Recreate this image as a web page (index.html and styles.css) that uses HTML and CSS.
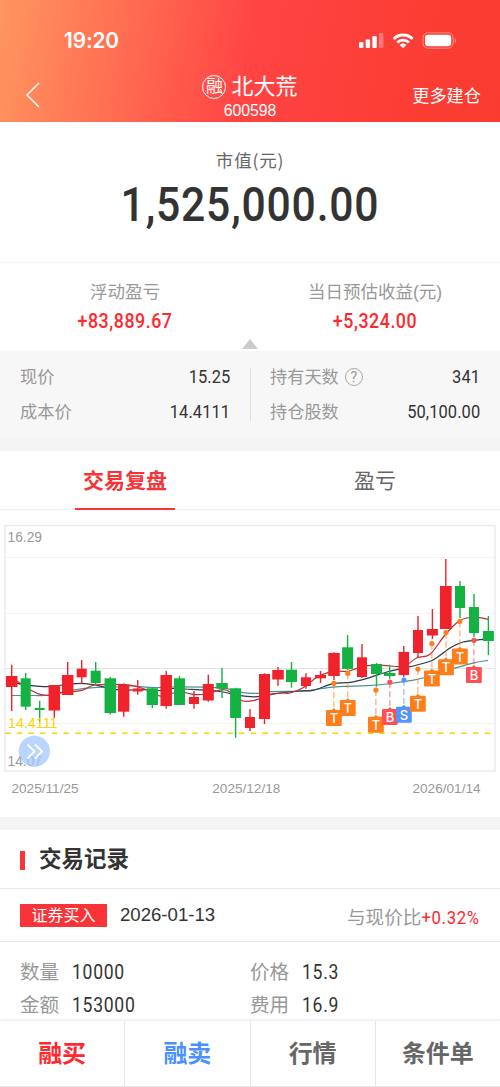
FILE: index.html
```html
<!DOCTYPE html>
<html lang="zh-CN">
<head>
    <meta charset="UTF-8">
    <meta name="viewport" content="width=device-width, initial-scale=1.0">
    <title>北大荒 600598</title>
    <link rel="stylesheet" href="styles.css">
</head>
<body>

<div class="page">
    <header class="header">
        <div class="status-bar">
            <span class="time">19:20</span>
            <svg class="status-icons" width="98" height="18" viewBox="0 0 98 18" fill="#fff">
                <rect x="0" y="10" width="4.4" height="6" rx="1.2"/>
                <rect x="6.7" y="7.3" width="4.4" height="8.7" rx="1.2"/>
                <rect x="13.4" y="4" width="4.4" height="12" rx="1.2"/>
                <rect x="20" y="1" width="4.4" height="15" rx="1.2" opacity="0.3"/>
                <!-- Wifi -->
                <path d="M33.6 5.9a15 15 0 0 1 21 0l-2 2.2a12 12 0 0 0-17 0z"/>
                <path d="M37.2 9.5a10 10 0 0 1 13.8 0l-2 2.1a7 7 0 0 0-9.8 0z"/>
                <path d="M40.7 12.9a5 5 0 0 1 6.8 0L44.1 16.2z"/>
                <!-- Battery -->
                <rect x="64" y="0.8" width="30.2" height="15.4" rx="4.8" fill="none" stroke="#fff" stroke-opacity="0.4"/>
                <rect x="66" y="2.8" width="26.2" height="11.4" rx="3"/>
                <path d="M95.8 6v5.2c1.6-.7 1.6-4.5 0-5.2z" opacity="0.5"/>
            </svg>
        </div>
        <div class="nav">
            <svg class="back" width="16" height="26" viewBox="0 0 16 26">
                <path d="M15 1L3 13l12 12" fill="none" stroke="#fff" stroke-width="1.5"/>
            </svg>
            <div class="stock">
                <div class="stock-name"><span class="badge">融</span>北大荒</div>
                <div class="stock-code">600598</div>
            </div>
            <span class="more">更多建仓</span>
        </div>
    </header>

    <section class="market-value">
        <div class="label">市值(元)</div>
        <div class="total">1,525,000.00</div>
    </section>

    <section class="profit">
        <div class="profit-item">
            <div class="profit-label">浮动盈亏</div>
            <div class="profit-value">+83,889.67</div>
        </div>
        <div class="profit-item">
            <div class="profit-label">当日预估收益(元)</div>
            <div class="profit-value">+5,324.00</div>
        </div>
        <span class="arrow-up"></span>
    </section>

    <section class="holding">
        <div class="holding-col">
            <div class="holding-row"><span>现价</span><b>15.25</b></div>
            <div class="holding-row"><span>成本价</span><b>14.4111</b></div>
        </div>
        <div class="holding-col">
            <div class="holding-row"><span>持有天数<i class="help">?</i></span><b>341</b></div>
            <div class="holding-row"><span>持仓股数</span><b>50,100.00</b></div>
        </div>
    </section>

    <nav class="tabs">
        <div class="tab"><span class="tab-text active">交易复盘</span></div>
        <div class="tab"><span class="tab-text">盈亏</span></div>
    </nav>

    <section class="chart">
        <svg id="kline" width="500" height="307" viewBox="0 510 500 307"></svg>
    </section>

    <section class="records">
        <h2 class="records-title">交易记录</h2>
        <div class="record-head">
            <span class="tag">证券买入</span>
            <span class="date">2026-01-13</span>
            <span class="compare">与现价比<em>+0.32%</em></span>
        </div>
        <div class="record-body">
            <div><span>数量</span><b>10000</b></div>
            <div><span>价格</span><b>15.3</b></div>
            <div><span>金额</span><b>153000</b></div>
            <div><span>费用</span><b>16.9</b></div>
        </div>
    </section>

    <footer class="actions">
        <div class="action buy">融买</div>
        <div class="action sell">融卖</div>
        <div class="action">行情</div>
        <div class="action">条件单</div>
    </footer>
</div>

<script src="chart.js"></script>
</body>
</html>
```

FILE: styles.css
```css
* {
    box-sizing: border-box;
}

body {
    margin: 0;
    font-family: "Liberation Sans", "Noto Sans CJK SC", sans-serif;
    background-color: #fff;
    color: #333;
}

.page {
    width: 500px;
    height: 1087px;
    display: flex;
    flex-direction: column;
    overflow: hidden;
}

/* Header */
.header {
    height: 122px;
    flex: none;
    background: linear-gradient(100deg, #ff9660 0%, #ff4444 50%, #fb3c32 85%, #fa3b30 100%);
    color: #fff;
}

.status-bar {
    height: 68px;
    padding: 27px 43px 0 64px;
    display: flex;
    justify-content: space-between;
}

.time {
    font: 600 20.8px/28px Inter, sans-serif;
    letter-spacing: -0.1px;
}

.status-icons {
    margin-top: 5px;
}

.nav {
    height: 54px;
    padding: 0 19px 0 24px;
    display: grid;
    grid-template-columns: 100px 1fr 105px;
}

.back {
    margin-top: 14px;
}

.stock {
    text-align: center;
}

.stock-name {
    display: flex;
    justify-content: center;
    align-items: center;
    height: 36px;
    padding-top: 2px;
    font-size: 22px;
    line-height: 34px;
}

.badge {
    width: 24px;
    height: 24px;
    margin-right: 5px;
    border: 1px solid #fff;
    border-radius: 50%;
    font-size: 17px;
    line-height: 21px;
    text-align: center;
}

.stock-code {
    font-size: 15.8px;
    line-height: 14px;
}

.more {
    font-size: 17.2px;
    line-height: 56px;
    text-align: right;
}

/* Market value */
.market-value {
    height: 141px;
    padding-top: 26px;
    text-align: center;
    border-bottom: 1px solid #f5f5f5;
}

.label {
    font-family: "Noto Sans CJK SC", sans-serif;
    font-size: 17.5px;
    line-height: 24px;
    letter-spacing: 0.8px;
    color: #666;
}

.total {
    font: 500 48.5px/66px Roboto, sans-serif;
    letter-spacing: 0.9px;
    transform: scaleX(0.88);
}

/* Profit */
.profit {
    position: relative;
    display: grid;
    grid-template-columns: 1fr 1fr;
    height: 88px;
    padding-top: 16px;
    text-align: center;
}

.profit-label {
    font-size: 17.5px;
    line-height: 26px;
    color: #999;
}

.profit-value {
    font: 500 19.8px/34px Roboto, sans-serif;
    letter-spacing: 0.6px;
    color: #ff282e;
    transform: scaleX(0.9);
}

.arrow-up {
    position: absolute;
    left: 242px;
    bottom: 2px;
    border: 8px solid transparent;
    border-top: 0;
    border-bottom: 10px solid #ccc;
}

/* Holding details */
.holding {
    display: grid;
    grid-template-columns: 1fr 1fr;
    height: 100px;
    padding: 17px 0 13px;
    background-color: #f7f7f7;
    border-bottom: 13px solid #f4f4f4;
}

.holding-col {
    height: 53px;
    padding: 0 20px;
    display: flex;
    flex-direction: column;
    justify-content: center;
}

.holding-col + .holding-col {
    border-left: 1px solid #ddd;
    padding-left: 19px;
}

.holding-row {
    display: flex;
    flex: none;
    justify-content: space-between;
    font-size: 17.2px;
    line-height: 35px;
    color: #999;
}

.holding-row b {
    font-family: Roboto, sans-serif;
    font-weight: 400;
    font-size: 18.3px;
    line-height: 34px;
    letter-spacing: 0.1px;
    color: #333;
    transform: scaleX(0.9);
    transform-origin: right;
}

.help {
    display: inline-block;
    width: 18px;
    height: 18px;
    margin-left: 6px;
    border: 1px solid #aaa;
    border-radius: 50%;
    font: 14px/16px Roboto, sans-serif;
    text-align: center;
    vertical-align: 1px;
}

/* Tabs */
.tabs {
    display: flex;
    height: 59px;
    border-bottom: 1px solid #eee;
}

.tab {
    flex: 1;
    text-align: center;
}

.tab-text {
    display: inline-block;
    width: 100px;
    height: 59px;
    font-size: 21px;
    line-height: 59px;
    color: #666;
}

.tab-text.active {
    font-weight: bold;
    color: #f83438;
    border-bottom: 2px solid #f83438;
}

/* Chart */
.chart {
    height: 320px;
    flex: none;
    border-bottom: 13px solid #f4f4f4;
}

.chart svg {
    display: block;
}

/* Trade records */
.records {
    height: 191px;
    flex: none;
    overflow: hidden;
}

.records-title {
    display: flex;
    align-items: center;
    height: 59px;
    margin: 0;
    padding: 2px 0 0 20px;
    font-size: 22.5px;
    font-weight: bold;
    line-height: 32px;
    border-bottom: 1px solid #e9e9e9;
}

.records-title::before {
    content: "";
    width: 5px;
    height: 19px;
    margin-right: 14px;
    background-color: #f83438;
}

.record-head {
    display: flex;
    align-items: flex-start;
    height: 53px;
    padding: 15px 20px 0;
    border-bottom: 1px solid #e9e9e9;
}

.tag {
    width: 87px;
    height: 23px;
    background-color: #f83438;
    color: #fff;
    font-size: 16px;
    line-height: 23px;
    text-align: center;
}

.date {
    margin-left: 13px;
    font-size: 18.6px;
    line-height: 22px;
}

.compare {
    margin-left: auto;
    font-size: 18.6px;
    line-height: 27px;
    color: #999;
}

.compare em {
    display: inline-block;
    margin-left: -6px;
    font-family: Roboto, sans-serif;
    font-style: normal;
    letter-spacing: 0.7px;
    color: #ff282e;
    transform: scaleX(0.9);
    transform-origin: right;
}

.record-body {
    display: grid;
    grid-template-columns: 230px 1fr;
    padding: 14px 20px 0;
    font-size: 19.6px;
    line-height: 33px;
    color: #999;
}

.record-body b {
    display: inline-block;
    margin-left: 13px;
    font-family: Roboto, sans-serif;
    font-weight: 400;
    font-size: 19.5px;
    letter-spacing: 0.8px;
    color: #333;
    transform: scaleX(0.9);
    transform-origin: left;
}

/* Bottom actions */
.actions {
    position: relative;
    display: flex;
    height: 66px;
    flex: none;
    background-color: #fff;
    border-bottom: 1px solid #e8e8e8;
    box-shadow: 0 -1px 3px rgba(0, 0, 0, 0.1);
}

.action {
    flex: 1;
    font-size: 24px;
    font-weight: bold;
    line-height: 65px;
    text-align: center;
    color: #666;
}

.action + .action {
    border-left: 1px solid #e6e6e6;
}

.action.buy {
    color: #ff282e;
}

.action.sell {
    color: #4a90ff;
}

/* K-line */
.axis-text {
    font-size: 13.8px;
    fill: #999;
}

.date-text {
    font-size: 13.6px;
    fill: #999;
}

.cost-text {
    font-size: 14.3px;
    fill: #fcd303;
}

.marker-text {
    font-family: Inter, sans-serif;
    font-size: 13px;
    font-weight: 500;
    fill: #fff;
    text-anchor: middle;
}
```

FILE: chart.js
```js
const UP = '#f0222b';
const DOWN = '#14b143';

// x, body width, wick top, body top, body bottom, wick bottom, color
const candles = [
    [11.7, 11.5, 664.7, 676, 687, 711, UP],
    [25.7, 10, 673, 678.3, 706.7, 710, DOWN],
    [39.7, 10, 700.7, 708, 710, 721.7, DOWN],
    [54.3, 11.5, 685, 685, 710.5, 717.7, UP],
    [67.7, 11.5, 662, 675, 695, 695, UP],
    [81.7, 10, 660, 668.7, 677.3, 684.3, UP],
    [95.7, 10, 662, 670.7, 683, 684.5, DOWN],
    [110.3, 11.5, 677, 678.3, 713, 714.3, DOWN],
    [123.7, 11.3, 683.3, 685, 711.7, 716.7, UP],
    [137.7, 10, 680, 688.5, 691.5, 694.7, UP],
    [152.3, 11.3, 686.7, 688.3, 705, 708, DOWN],
    [166.2, 11.5, 671, 675, 706, 708.7, UP],
    [179.5, 11, 676, 678.3, 705, 705, DOWN],
    [194, 10, 691, 697, 704, 708.7, UP],
    [208.3, 11, 674.7, 684, 700.5, 701.7, UP],
    [222, 11.5, 668, 683, 688.7, 698, DOWN],
    [235.6, 11, 687.7, 688.3, 718, 737.7, DOWN],
    [250, 10, 709, 717, 728, 731, UP],
    [264.5, 11, 673.3, 674, 719, 724, UP],
    [278, 11.5, 667, 670, 679.5, 685.7, UP],
    [291.5, 11, 662, 669.7, 682, 687.7, DOWN],
    [306, 10, 673.3, 677.3, 686, 688.7, UP],
    [320.5, 11, 671, 675, 678.3, 683, UP],
    [334, 11.5, 652.3, 653, 676, 680, UP],
    [347.6, 11, 635, 647.3, 669, 670, DOWN],
    [362, 10, 644, 657.3, 677, 678, UP],
    [376.5, 11, 663, 664, 674, 686.7, DOWN],
    [389.7, 11.5, 664.7, 673, 676, 678.7, DOWN],
    [403.8, 10.5, 646, 652, 675, 677, UP],
    [418, 10, 616, 630, 653, 657, UP],
    [432.4, 11, 609, 629, 635.5, 639, UP],
    [445.8, 11.7, 559, 586, 629, 629, UP],
    [460, 10, 581, 586, 608, 618, DOWN],
    [474, 10, 594, 607, 633, 637, DOWN],
    [488.4, 11, 616, 631, 641, 655, DOWN]
];

const averages = [
    {
        color: '#4c9193',
        points: [[12, 695.5], [33, 695.5], [50, 695], [73, 690], [97, 687.3], [117, 687], [133, 686], [153, 687.7], [170, 687], [210, 687.3], [227, 688.7], [243, 692.7], [257, 693.3], [270, 691.7], [293, 691.3], [310, 690.3], [330, 687.3], [345, 686.3], [367, 685.7], [387, 684], [410, 680.7], [423, 678], [445, 671], [460, 666.7], [475, 662.7], [488, 660.3]]
    },
    {
        color: '#26394d',
        points: [[12, 682.7], [17, 683.3], [32, 685.7], [47, 686.7], [63, 685], [82, 683.3], [97, 685.3], [117, 689.7], [133, 690], [147, 689.7], [157, 691], [172, 688.5], [185, 689], [217, 691], [240, 695.7], [257, 696.7], [275, 693.7], [300, 691], [313, 690.3], [333, 683.7], [350, 682.3], [367, 678.3], [387, 672], [404, 668], [417, 665], [433, 660], [450, 648], [463, 642], [480, 639.7], [488, 639]]
    },
    {
        color: '#c52b30',
        points: [[12, 680], [18, 681.7], [32, 690.7], [40, 694.3], [50, 695.3], [63, 692.3], [82, 690.3], [95, 685], [125, 684.7], [137, 686.7], [147, 690], [160, 696], [170, 694], [180, 691.7], [193, 694.3], [205, 694], [222, 689.7], [230, 692], [242, 700.7], [253, 700.7], [270, 695], [282, 693], [290, 693], [303, 687.7], [317, 677.3], [328, 672.7], [338, 671.3], [348, 671.3], [357, 668.3], [368, 665.7], [383, 665.3], [400, 666.7], [408, 664], [417, 657.7], [430, 654.3], [445, 635], [458, 621.7], [467, 618], [478, 617.3], [488, 619.3]]
    }
];

// x, dot y, box y, letter, color
const markers = [
    [333.9, 683.3, 718, 'T', '#ff7e1c'],
    [347.8, 673.3, 708, 'T', '#ff7e1c'],
    [375.9, 690, 724.7, 'T', '#ff7e1c'],
    [389.9, 682.2, 717, 'B', '#fc5054'],
    [403.9, 680, 714.8, 'S', '#5394fa'],
    [417.9, 669, 703.8, 'T', '#ff7e1c'],
    [431.9, 643.5, 678.5, 'T', '#ff7e1c'],
    [446, 632.5, 667.3, 'T', '#ff7e1c'],
    [459.9, 621.3, 656.5, 'T', '#ff7e1c'],
    [473.9, 640.3, 675, 'B', '#fc5054']
];

// Smooth line through all the points
function curve(p) {
    let d = `M${p[0]}`;
    for (let i = 0; i < p.length - 1; i++) {
        const a = p[i - 1] || p[i], b = p[i], c = p[i + 1], e = p[i + 2] || c;
        d += `C${b[0] + (c[0] - a[0]) / 6} ${b[1] + (c[1] - a[1]) / 6} ${c[0] - (e[0] - b[0]) / 6} ${c[1] - (e[1] - b[1]) / 6} ${c}`;
    }
    return d;
}

let out = '';

// Grid and frame
[557.5, 613.5, 668.5, 723.5].forEach(y => {
    out += `<path d="M5 ${y}H495" stroke="${y === 668.5 ? '#e2e2ec' : '#f2f2f7'}"/>`;
});
out += '<rect x="5" y="525.5" width="490" height="245.5" fill="none" stroke="#e8e8f0" stroke-width="1.4"/>';

averages.forEach(a => {
    out += `<path d="${curve(a.points)}" fill="none" stroke="${a.color}" stroke-width="1.2"/>`;
});

candles.forEach(([x, w, high, top, bottom, low, color]) => {
    out += `<path d="M${x} ${high}V${low}" stroke="${color}" stroke-width="1.4"/>`;
    out += `<rect x="${x - w / 2}" y="${top}" width="${w}" height="${bottom - top}" fill="${color}"/>`;
});

// Cost line
out += '<path d="M5 733.2H495" stroke="#fcd303" stroke-width="1.4" stroke-dasharray="5.5 6.2"/>';

markers.forEach(([x, dot, y, letter, color]) => {
    out += `<path d="M${x} ${dot}V${y - 7}" stroke="${color}" stroke-opacity="0.8" stroke-dasharray="6 3"/>`;
    out += `<circle cx="${x}" cy="${dot}" r="2.6" fill="${color}"/>`;
    out += `<path d="M${x - 3} ${y - 7}l3-3 3 3z" fill="${color}"/>`;
    out += `<rect x="${x - 7.9}" y="${y - 8}" width="15.8" height="16" rx="1.3" fill="${color}"/>`;
    out += `<text class="marker-text" x="${x}" y="${y + 5}">${letter}</text>`;
});

out += '<text class="axis-text" x="7.5" y="542">16.29</text>';
out += '<text class="axis-text" x="7.5" y="766">14.07</text>';
out += '<text class="cost-text" x="8" y="728">14.4111</text>';
out += '<text class="date-text" x="11.5" y="793">2025/11/25</text>';
out += '<text class="date-text" x="212.3" y="793">2025/12/18</text>';
out += '<text class="date-text" x="412.5" y="793">2026/01/14</text>';

// Expand button
out += '<circle cx="34.3" cy="751.3" r="15.6" fill="#a3c7ff" fill-opacity="0.75"/>';
out += '<path d="M27.5 744.5l7 7-7 7M35 744.5l7 7-7 7" fill="none" stroke="#fff" stroke-width="1.8"/>';

document.getElementById('kline').innerHTML = out;
```
